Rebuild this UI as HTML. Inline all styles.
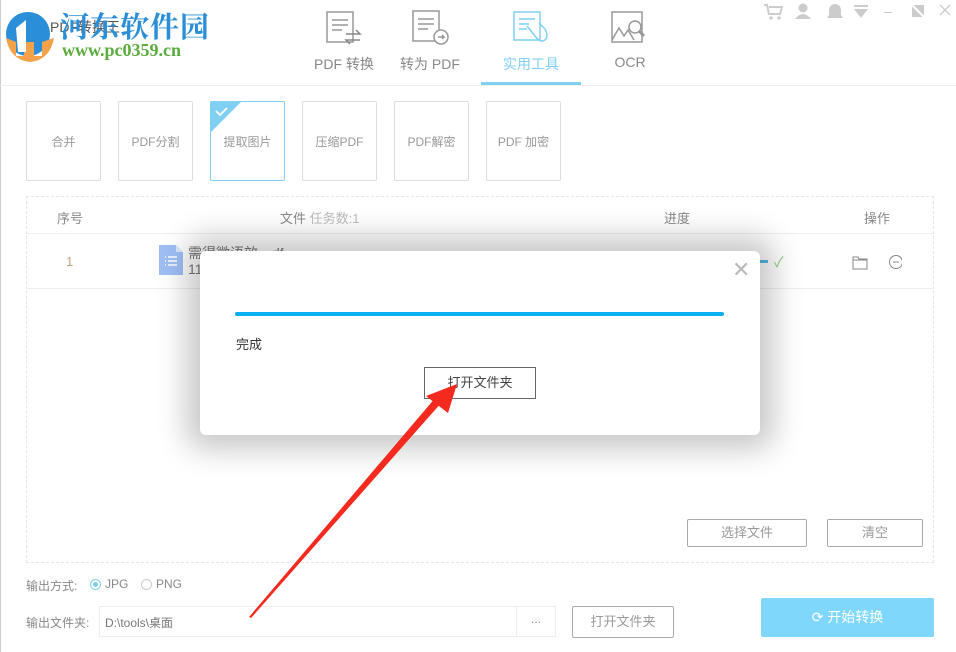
<!DOCTYPE html>
<html><head><meta charset="utf-8"><style>
*{margin:0;padding:0;box-sizing:border-box}
body{width:956px;height:652px;background:#fff;position:relative;overflow:hidden;font-family:"Liberation Sans","Noto Sans CJK SC",sans-serif;color:#888;font-size:13px}
.a{position:absolute}
.tab{position:absolute;top:0;width:92px;height:86px;text-align:center;font-size:14px;color:#888}
.tab span{position:absolute;top:54px;left:0;right:0}
.card{position:absolute;top:101px;width:75px;height:80px;border:1px solid #ddd;border-radius:2px;text-align:center;line-height:80px;font-size:12px;color:#999}
.btn{position:absolute;border:1px solid #aaa;border-radius:2px;text-align:center;color:#999;font-size:13px;background:#fff}
</style></head><body>
<div class="a" style="left:0;top:0;width:1px;height:652px;background:#ccc"></div>
<div class="a" style="left:0;top:85px;width:956px;height:1px;background:#eee"></div>
<!-- logo -->
<svg class="a" style="left:2px;top:8px" width="56" height="56" viewBox="0 0 56 56"><circle cx="26" cy="26" r="22" fill="#2a8fd8"/><path d="M4 30 Q8 52 28 54 Q48 52 52 30 L40 34 L40 48 L32 48 L32 34 L22 34 L22 48 L14 48 L14 34Z" fill="#f4a24a"/><path d="M14 20 L24 12 L24 44 L16 44Z" fill="#fff"/></svg>
<div class="a" style="left:50px;top:17px;font-size:14px;color:#555">PDF转换王</div>
<div class="a" style="left:60px;top:5px;font-size:29px;font-weight:bold;color:#2a8fd8;letter-spacing:1px;font-family:'Noto Serif CJK SC',serif">河东软件园</div>
<div class="a" style="left:62px;top:40px;font-size:18px;font-weight:bold;color:#5aac3c;font-family:'Liberation Serif',serif">www.pc0359.cn</div>
<!-- tabs -->
<div class="tab" style="left:298px"><svg style="margin-top:10px" width="40" height="36" viewBox="0 0 40 36" fill="none" stroke="#999" stroke-width="1.5"><rect x="3" y="2" width="26" height="30"/><path d="M8 10h16M8 15h16M8 20h10"/><path d="M22 24h14l-4-4M36 30H22l4 4" stroke="#888"/></svg><span>PDF 转换</span></div>
<div class="tab" style="left:384px"><svg style="margin-top:10px" width="40" height="36" viewBox="0 0 40 36" fill="none" stroke="#999" stroke-width="1.5"><rect x="3" y="1" width="26" height="30"/><path d="M8 9h16M8 14h16M8 19h10"/><circle cx="31" cy="27" r="7" fill="#fff"/><path d="M28 27h6l-2-2M34 27l-2 2"/></svg><span>转为 PDF</span></div>
<div class="tab" style="left:481px;width:100px;color:#7fd0f2"><svg style="margin-top:10px" width="40" height="36" viewBox="0 0 40 36" fill="none" stroke="#7fd0f2" stroke-width="1.5"><rect x="3" y="2" width="26" height="28"/><path d="M8 9h16M8 14h10M8 19h8"/><path d="M16 16l8 10c2 3 6 7 10 4 3-3 2-8 0-11l-6-6"/></svg><span>实用工具</span></div>
<div class="a" style="left:481px;top:82px;width:100px;height:3px;background:#7fd0f2"></div>
<div class="tab" style="left:584px"><svg style="margin-top:10px" width="40" height="36" viewBox="0 0 40 36" fill="none" stroke="#999" stroke-width="1.5"><rect x="2" y="2" width="30" height="30"/><path d="M2 30l7-12 5 8 4-6 6 10"/><circle cx="25" cy="17" r="6" fill="#fff"/><path d="M29 21l5 5" stroke-width="3"/></svg><span>OCR</span></div>
<!-- top right icons -->
<svg class="a" style="left:763px;top:2px" width="190" height="20" viewBox="0 0 190 20" fill="#ccc"><path d="M1 3h3l2 9h11l2-7H6" fill="none" stroke="#ccc" stroke-width="2"/><circle cx="8" cy="16" r="1.6"/><circle cx="16" cy="16" r="1.6"/><g transform="translate(29 0)"><circle cx="11" cy="6" r="4.5"/><path d="M3 17q8-10 16 0z"/><path d="M35 16h16l-2-3v-5a6 6 0 0 0-12 0v5z"/><rect x="62" y="3" width="14" height="2"/><path d="M62 7h14l-7 9z"/><rect x="92" y="10" width="8" height="1"/><path d="M120 3h12v12h-12z"/><path d="M120 3l12 12" stroke="#fff" stroke-width="2"/><path d="M148 3l10 10M158 3l-10 10" stroke="#ccc" stroke-width="1.3"/></g></svg>
<!-- cards -->
<div class="card" style="left:26px">合并</div>
<div class="card" style="left:118px">PDF分割</div>
<div class="card" style="left:210px;border-color:#7fd0f2">提取图片<svg class="a" style="left:0;top:0" width="30" height="30"><path d="M0 0h30L0 30z" fill="#7fd0f2"/><path d="M5 9l4 4 7-7" stroke="#fff" stroke-width="1.8" fill="none"/></svg></div>
<div class="card" style="left:302px">压缩PDF</div>
<div class="card" style="left:394px">PDF解密</div>
<div class="card" style="left:486px">PDF 加密</div>
<!-- table -->
<div class="a" style="left:26px;top:196px;width:908px;height:367px;border:1px dashed #e6e6e6"></div>
<div class="a" style="left:27px;top:233px;width:906px;height:1px;background:#eee"></div>
<div class="a" style="left:27px;top:288px;width:906px;height:1px;background:#eee"></div>
<div class="a" style="left:57px;top:208px">序号</div>
<div class="a" style="left:280px;top:208px">文件 <span style="color:#bbb">任务数:1</span></div>
<div class="a" style="left:664px;top:208px">进度</div>
<div class="a" style="left:864px;top:208px">操作</div>
<div class="a" style="left:66px;top:254px;color:#c8a27a">1</div>
<svg class="a" style="left:159px;top:245px" width="24" height="30"><path d="M0 0h17l7 7v23H0z" fill="#9fbff5"/><path d="M17 0v7h7" fill="#dbe7fb"/><path d="M6 12h1M6 16h1M6 20h1M9 12h9M9 16h9M9 20h9" stroke="#fff" stroke-width="1.5"/></svg>
<div class="a" style="left:188px;top:245px;font-size:14px;color:#777;line-height:16px">需得微语效…df<br>11</div>
<div class="a" style="left:758px;top:260px;width:10px;height:3px;background:#5bb9e6"></div>
<div class="a" style="left:774px;top:252px;color:#8cd07c;font-size:14px">✓</div>
<svg class="a" style="left:852px;top:254px" width="50" height="16" fill="none" stroke="#888" stroke-width="1"><path d="M1 3h5l1 2h8v10H1z"/><path d="M1 6h14"/><circle cx="44" cy="8" r="6.5"/><path d="M41 8h6"/></svg>
<!-- dialog -->
<div class="a" style="left:200px;top:251px;width:560px;height:184px;background:#fff;border-radius:6px;box-shadow:0 0 30px 14px rgba(0,0,0,0.22)"></div>
<div class="a" style="left:732px;top:257px;font-size:22px;color:#bbb;font-weight:300">✕</div>
<div class="a" style="left:235px;top:312px;width:489px;height:4px;border-radius:2px;background:#05b0f0"></div>
<div class="a" style="left:236px;top:334px;color:#333">完成</div>
<div class="a" style="left:424px;top:367px;width:112px;height:32px;border:1px solid #666;text-align:center;line-height:30px;color:#444;font-size:13px">打开文件夹</div>
<!-- buttons -->
<div class="btn" style="left:687px;top:519px;width:120px;height:28px;line-height:26px">选择文件</div>
<div class="btn" style="left:827px;top:519px;width:96px;height:28px;line-height:26px">清空</div>
<div class="a" style="left:26px;top:577px;font-size:12px">输出方式:</div>
<div class="a" style="left:90px;top:579px;width:11px;height:11px;border:1px solid #7fd0f2;border-radius:50%"><div style="margin:2px;width:5px;height:5px;border-radius:50%;background:#7fd0f2"></div></div>
<div class="a" style="left:105px;top:577px;font-size:12px">JPG</div>
<div class="a" style="left:141px;top:579px;width:11px;height:11px;border:1px solid #ccc;border-radius:50%"></div>
<div class="a" style="left:156px;top:577px;font-size:12px">PNG</div>
<div class="a" style="left:26px;top:614px;font-size:12px">输出文件夹:</div>
<div class="a" style="left:99px;top:606px;width:457px;height:31px;border:1px solid #eee"></div>
<div class="a" style="left:516px;top:606px;width:1px;height:31px;background:#eee"></div>
<div class="a" style="left:105px;top:614px;font-size:12px;color:#777">D:\tools\桌面</div>
<div class="a" style="left:531px;top:612px;font-size:12px">...</div>
<div class="btn" style="left:572px;top:606px;width:102px;height:32px;line-height:30px">打开文件夹</div>
<div class="a" style="left:761px;top:598px;width:173px;height:39px;background:#7fd7fc;border-radius:2px;color:#fff;font-size:14px;line-height:39px;text-align:center">⟳ 开始转换</div>
<!-- arrow -->
<svg class="a" style="left:0;top:0" width="956" height="652"><path d="M249 617L251 618L442 402L436 397Z" fill="#f42a1e"/><path d="M457 384L426 396L448 413Z" fill="#f42a1e"/></svg>
</body></html>
